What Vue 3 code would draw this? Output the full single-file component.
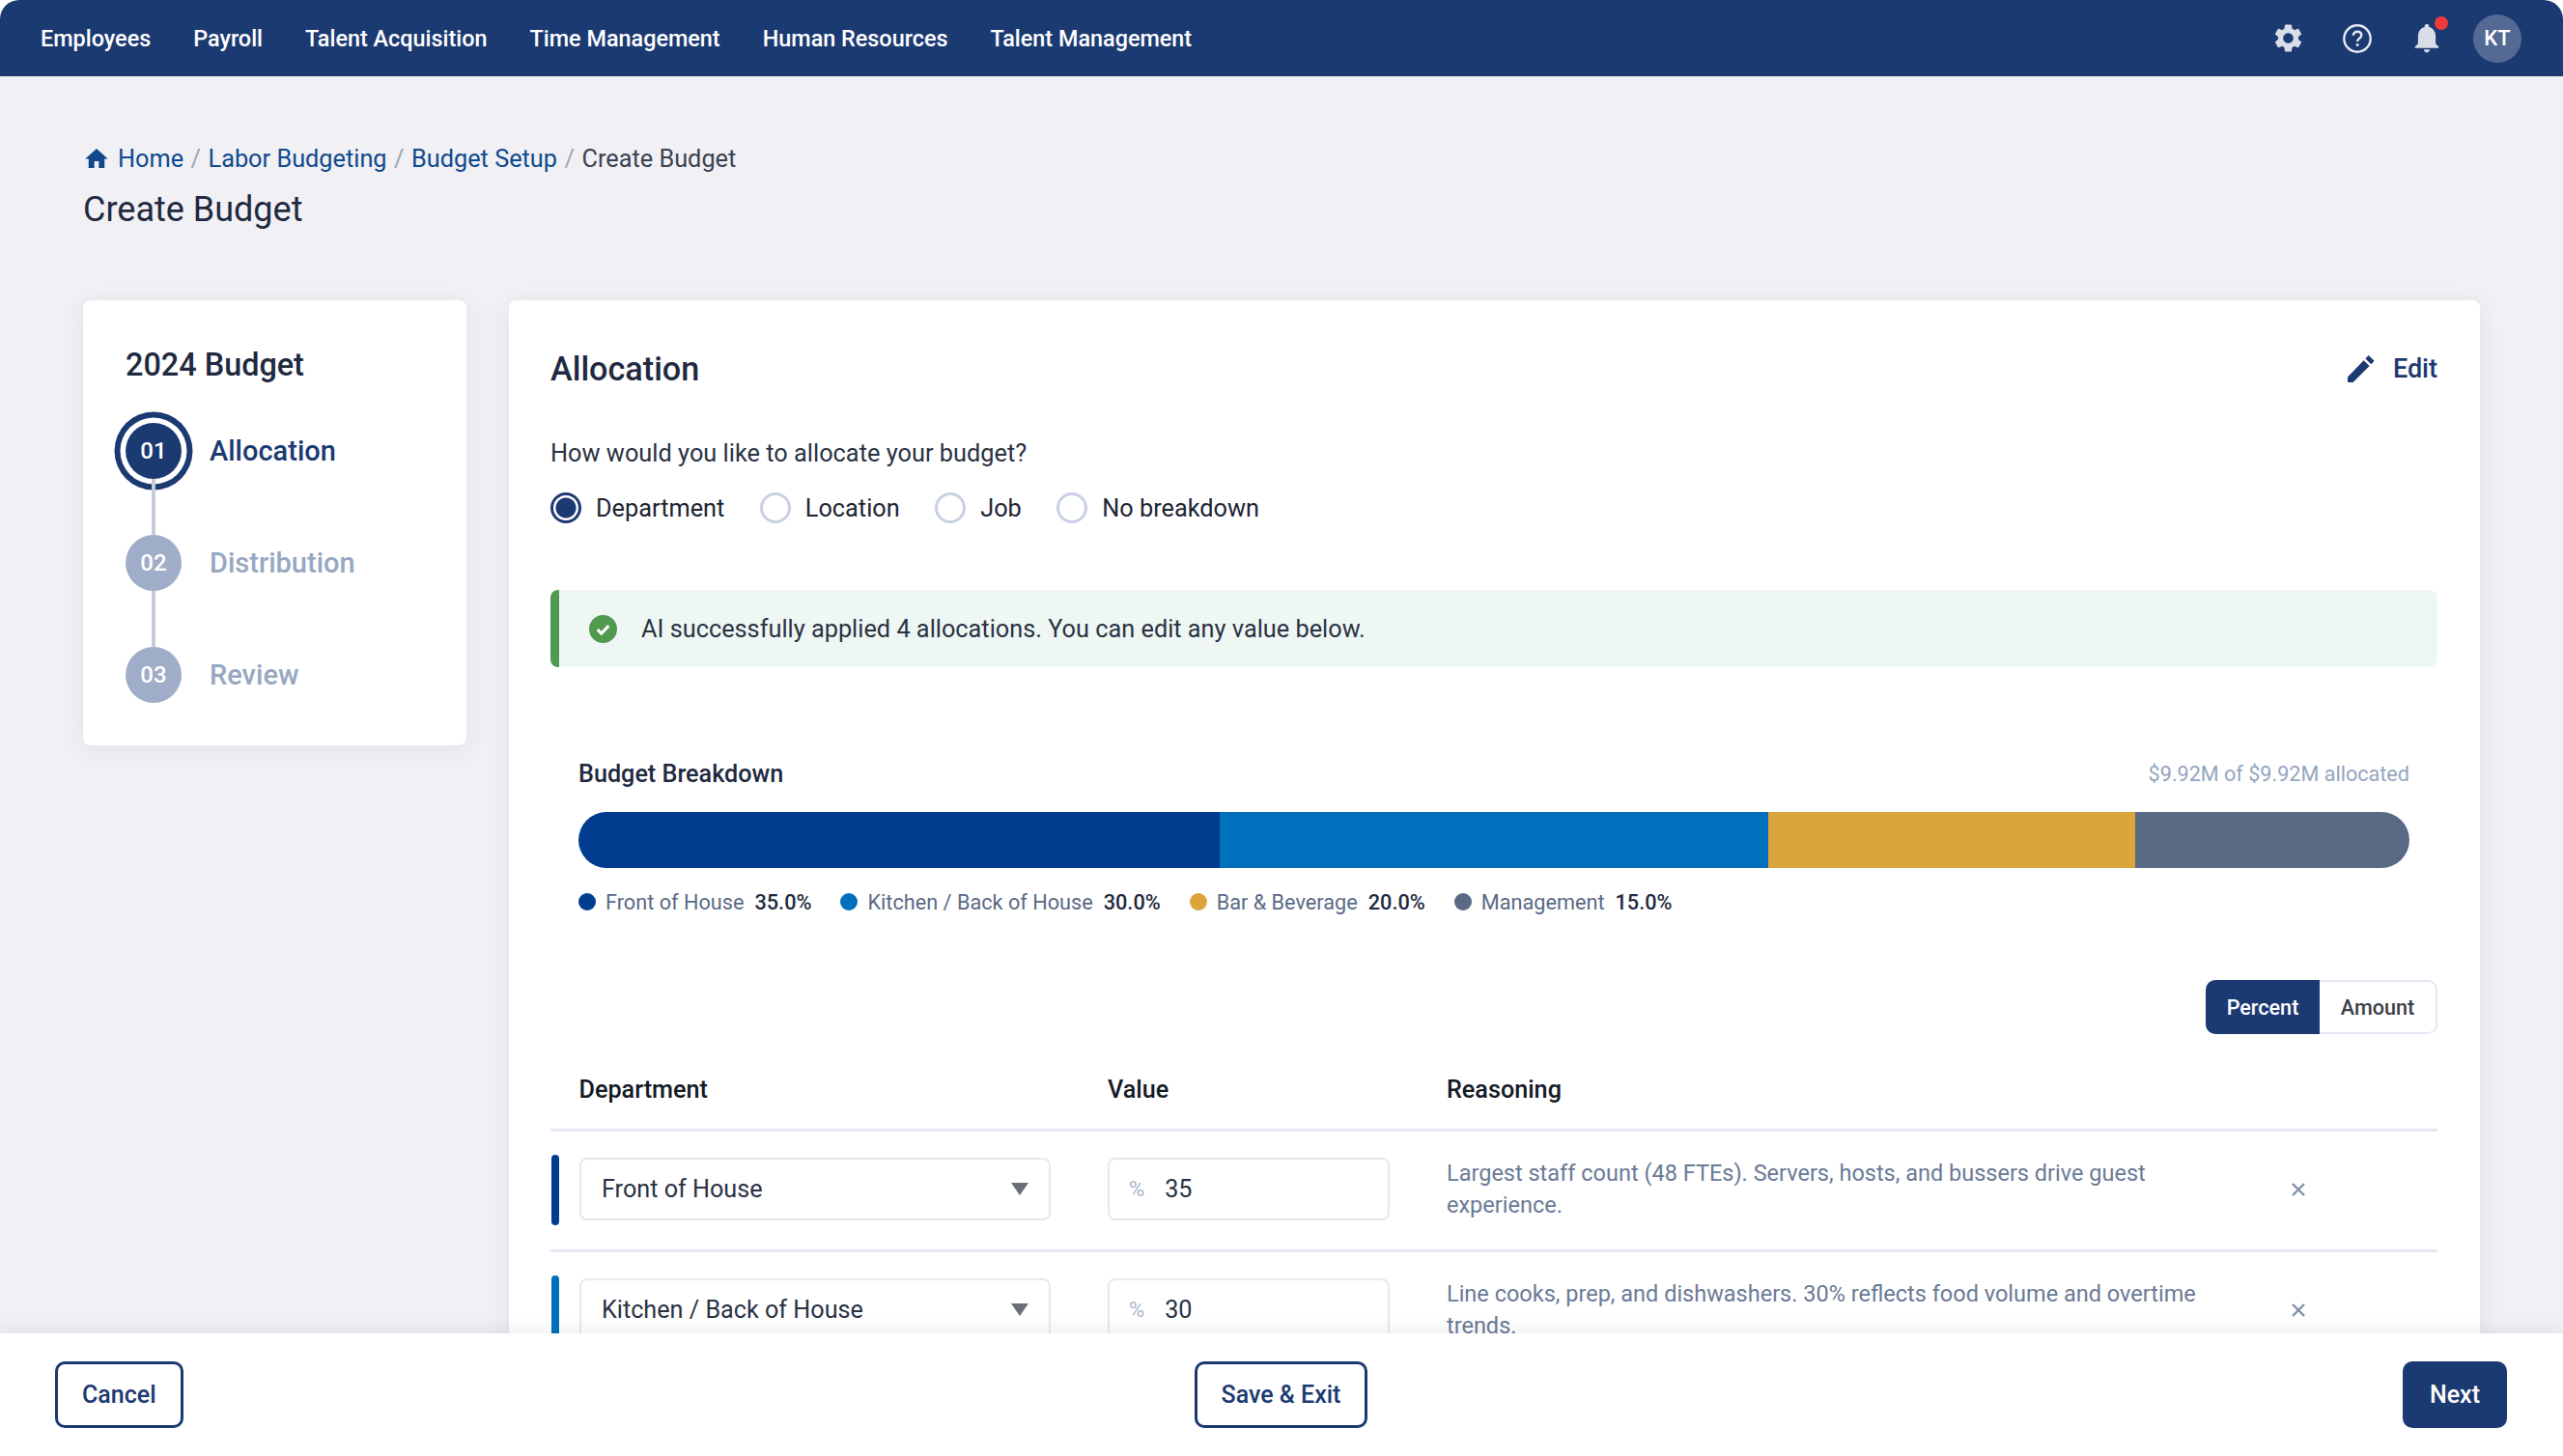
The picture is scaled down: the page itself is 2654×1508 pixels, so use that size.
<script setup>
import { ref } from 'vue'

const navItems = ['Employees', 'Payroll', 'Talent Acquisition', 'Time Management', 'Human Resources', 'Talent Management']
const steps = [
  { num: '01', label: 'Allocation', active: true },
  { num: '02', label: 'Distribution', active: false },
  { num: '03', label: 'Review', active: false },
]
const allocateBy = ref('Department')
const radios = ['Department', 'Location', 'Job', 'No breakdown']
const segments = [
  { label: 'Front of House', pct: 35, color: '#003d8f' },
  { label: 'Kitchen / Back of House', pct: 30, color: '#0070bd' },
  { label: 'Bar & Beverage', pct: 20, color: '#dba53c' },
  { label: 'Management', pct: 15, color: '#5a6a85' },
]
const rows = [
  { dept: 'Front of House', value: 35, color: '#003d8f', reason: 'Largest staff count (48 FTEs). Servers, hosts, and bussers drive guest experience.' },
  { dept: 'Kitchen / Back of House', value: 30, color: '#0070bd', reason: 'Line cooks, prep, and dishwashers. 30% reflects food volume and overtime trends.' },
]
</script>

<template>
  <div class="page">
    <header class="topnav">
      <nav class="nav-links">
        <a v-for="item in navItems" :key="item">{{ item }}</a>
      </nav>
      <div class="nav-icons">
        <svg class="ico-gear" viewBox="0 0 24 24"><path d="M19.14 12.94c.04-.3.06-.61.06-.94 0-.32-.02-.64-.07-.94l2.03-1.58c.18-.14.23-.41.12-.61l-1.92-3.32c-.12-.22-.37-.29-.59-.22l-2.39.96c-.5-.38-1.03-.7-1.62-.94l-.36-2.54c-.04-.24-.24-.41-.48-.41h-3.84c-.24 0-.43.17-.47.41l-.36 2.54c-.59.24-1.13.57-1.62.94l-2.39-.96c-.22-.08-.47 0-.59.22L2.74 8.87c-.12.21-.08.47.12.61l2.03 1.58c-.05.3-.09.63-.09.94s.02.64.07.94l-2.03 1.58c-.18.14-.23.41-.12.61l1.92 3.32c.12.22.37.29.59.22l2.39-.96c.5.38 1.03.7 1.62.94l.36 2.54c.05.24.24.41.48.41h3.84c.24 0 .44-.17.47-.41l.36-2.54c.59-.24 1.13-.56 1.62-.94l2.39.96c.22.08.47 0 .59-.22l1.92-3.32c.12-.22.07-.47-.12-.61l-2.01-1.58zM12 15.6c-1.98 0-3.6-1.62-3.6-3.6s1.62-3.6 3.6-3.6 3.6 1.62 3.6 3.6-1.62 3.6-3.6 3.6z" /></svg>
        <svg class="ico-help" viewBox="0 0 30 30">
          <circle cx="15" cy="15" r="13.7" fill="none" stroke="#e6e9f1" stroke-width="2.4" />
          <path d="M10.8 11.8c0-2.5 1.9-4.1 4.3-4.1s4.2 1.5 4.2 3.7c0 3.1-4.2 3.3-4.2 6.6" fill="none" stroke="#e6e9f1" stroke-width="2.4" />
          <circle cx="15.1" cy="21.6" r="1.5" fill="#e6e9f1" />
        </svg>
        <span class="bell">
          <svg viewBox="3.5 2 17 20.4"><path d="M12 22c1.1 0 2-.9 2-2h-4c0 1.1.9 2 2 2zm6-6v-5c0-3.07-1.63-5.64-4.5-6.32V4c0-.83-.67-1.5-1.5-1.5s-1.5.67-1.5 1.5v.68C7.64 5.36 6 7.92 6 11v5l-2 2v1h16v-1l-2-2z" /></svg>
          <i class="bell-dot"></i>
        </span>
        <span class="avatar">KT</span>
      </div>
    </header>

    <main class="content">
      <div class="crumbs">
        <svg class="ico-home" viewBox="2 3 20 17"><path d="M10 20v-6h4v6h5v-8h3L12 3 2 12h3v8z" /></svg>
        <a>Home</a><span class="sep">/</span>
        <a>Labor Budgeting</a><span class="sep">/</span>
        <a>Budget Setup</a><span class="sep">/</span>
        <span class="here">Create Budget</span>
      </div>
      <h1 class="page-title">Create Budget</h1>

      <div class="columns">
        <aside class="side-card">
          <h2>2024 Budget</h2>
          <ol class="steps">
            <li v-for="s in steps" :key="s.num" class="step" :class="{ active: s.active }">
              <span class="step-num">{{ s.num }}</span>
              <span class="step-label">{{ s.label }}</span>
            </li>
          </ol>
        </aside>

        <section class="main-card">
          <div class="card-head">
            <h2>Allocation</h2>
            <a class="edit">
              <svg viewBox="0 0 28 28"><path d="M0 28V22.4L16.6 5.2 22.6 11 5.6 28zM18.4 3.4 21.6 0l6 5.8-3.3 3.4z" /></svg>
              Edit
            </a>
          </div>

          <p class="question">How would you like to allocate your budget?</p>
          <div class="radios">
            <label v-for="r in radios" :key="r" class="radio" :class="{ on: allocateBy === r }" @click="allocateBy = r">
              <i class="radio-mark"></i>{{ r }}
            </label>
          </div>

          <div class="alert">
            <svg viewBox="0 0 30 30"><circle cx="15" cy="15" r="15" fill="#4f9a4e" /><path d="M9 15.5l4.2 4.2L21 11.5" fill="none" stroke="#fff" stroke-width="3.2" /></svg>
            <span>AI successfully applied 4 allocations. You can edit any value below.</span>
          </div>

          <div class="breakdown">
            <div class="breakdown-head">
              <strong>Budget Breakdown</strong>
              <span>$9.92M of $9.92M allocated</span>
            </div>
            <div class="bar">
              <span v-for="s in segments" :key="s.label" :style="{ width: s.pct + '%', background: s.color }"></span>
            </div>
            <ul class="legend">
              <li v-for="s in segments" :key="s.label">
                <i :style="{ background: s.color }"></i>{{ s.label }}<b>{{ s.pct.toFixed(1) }}%</b>
              </li>
            </ul>
          </div>

          <div class="toggle-row">
            <div class="toggle">
              <button class="sel">Percent</button>
              <button>Amount</button>
            </div>
          </div>

          <div class="table">
            <div class="tr th">
              <span>Department</span>
              <span>Value</span>
              <span>Reasoning</span>
            </div>
            <div v-for="row in rows" :key="row.dept" class="tr">
              <i class="row-color" :style="{ background: row.color }"></i>
              <div class="select">{{ row.dept }}<i class="caret"></i></div>
              <div class="value"><em>%</em>{{ row.value }}</div>
              <p class="reason">{{ row.reason }}</p>
              <svg class="remove" viewBox="0 0 16 16"><path d="M2 2l12 12M14 2 2 14" fill="none" stroke="#7f90ab" stroke-width="2.4" /></svg>
            </div>
          </div>
        </section>
      </div>
    </main>

    <footer class="footer">
      <div><button class="btn">Cancel</button></div>
      <button class="btn">Save &amp; Exit</button>
      <div class="right"><button class="btn primary">Next</button></div>
    </footer>
  </div>
</template>

<style scoped>
.page {
  height: 1508px;
  display: flex;
  flex-direction: column;
  overflow: hidden;
  background: #fff;
  font-family: Roboto, "Liberation Sans", sans-serif;
  color: #1f2a40;
}

.topnav {
  height: 79px;
  flex-shrink: 0;
  display: flex;
  justify-content: space-between;
  align-items: center;
  padding: 0 43px 0 42px;
  background: #1c3a72;
  border-radius: 20px 20px 0 0;
  position: relative;
  z-index: 2;
}
.nav-links {
  display: flex;
  gap: 44px;
}
.nav-links a {
  color: #fff;
  font-size: 23.4px;
  font-weight: 500;
}
.nav-icons {
  display: flex;
  align-items: center;
}
.ico-gear {
  width: 35px;
  height: 35px;
  fill: #d9dde8;
}
.ico-help {
  width: 30px;
  height: 30px;
  margin-left: 39px;
}
.bell {
  position: relative;
  display: block;
  width: 26px;
  height: 31px;
  margin-left: 44px;
}
.bell svg {
  width: 26px;
  height: 31px;
  fill: #d9dde8;
  display: block;
}
.bell-dot {
  position: absolute;
  top: -7px;
  right: -9px;
  width: 14px;
  height: 14px;
  border-radius: 50%;
  background: #f23a3a;
}
.avatar {
  width: 50px;
  height: 50px;
  margin-left: 35px;
  border-radius: 50%;
  background: #546a94;
  color: #fff;
  font-size: 22px;
  font-weight: 500;
  display: flex;
  align-items: center;
  justify-content: center;
}

.content {
  flex: 1;
  min-height: 0;
  overflow: hidden;
  background: #f1f0f4;
  padding: 70px 86px 0;
}
.crumbs {
  display: flex;
  align-items: center;
  height: 30px;
  font-size: 25.3px;
  color: #0f4a8e;
}
.ico-home {
  width: 24px;
  height: 20px;
  fill: #0f4a8e;
  margin: 0 10px 0 2px;
}
.sep {
  color: #9aa6ba;
  margin: 0 7.5px;
}
.here {
  color: #3a4252;
}
.page-title {
  margin: 16px 0 0;
  font-size: 36px;
  line-height: 44px;
  font-weight: 400;
  color: #1f2a40;
}

.columns {
  display: flex;
  align-items: flex-start;
  gap: 44px;
  margin-top: 72px;
}
.side-card {
  width: 397px;
  height: 461px;
  flex-shrink: 0;
  box-sizing: border-box;
  padding: 45px 44px 0;
  background: #fff;
  border-radius: 8px;
  box-shadow: 0 4px 26px rgba(50, 50, 90, 0.08);
}
.side-card h2 {
  margin: 0;
  font-size: 32.4px;
  line-height: 44px;
  font-weight: 500;
  color: #1f2a40;
}
.steps {
  list-style: none;
  margin: 38px 0 0;
  padding: 0;
}
.step {
  position: relative;
  display: flex;
  align-items: center;
  gap: 29px;
  height: 58px;
  margin-bottom: 58px;
}
.step:not(:last-child)::after {
  content: "";
  position: absolute;
  left: 27px;
  top: 58px;
  width: 4px;
  height: 58px;
  background: #c5cbdb;
}
.step-num {
  width: 58px;
  height: 58px;
  flex-shrink: 0;
  border-radius: 50%;
  background: #a0adc8;
  color: #fff;
  font-size: 24px;
  font-weight: 500;
  display: flex;
  align-items: center;
  justify-content: center;
}
.step-label {
  font-size: 29px;
  font-weight: 500;
  color: #97a7c2;
}
.step.active .step-num {
  background: #1c3a72;
  box-shadow: 0 0 0 5.5px #fff, 0 0 0 11.5px #1c3a72;
}
.step.active .step-label {
  color: #1c3a72;
}

.main-card {
  flex: 1;
  min-width: 0;
  height: 1400px;
  box-sizing: border-box;
  padding: 0 44px 0 43px;
  background: #fff;
  border-radius: 8px 8px 0 0;
  box-shadow: 0 4px 26px rgba(50, 50, 90, 0.08);
}
.card-head {
  height: 141px;
  display: flex;
  justify-content: space-between;
  align-items: center;
}
.card-head h2 {
  margin: 0;
  font-size: 34.2px;
  font-weight: 500;
  color: #1f2a40;
}
.edit {
  display: flex;
  align-items: center;
  gap: 19px;
  font-size: 27px;
  font-weight: 500;
  color: #1c3a72;
}
.edit svg {
  width: 28px;
  height: 28px;
  fill: #1c3a72;
}
.question {
  margin: 0;
  font-size: 25.35px;
  line-height: 34px;
  color: #2a3243;
}
.radios {
  display: flex;
  gap: 36.5px;
  margin-top: 24px;
}
.radio {
  display: flex;
  align-items: center;
  gap: 15px;
  height: 32px;
  font-size: 25.3px;
  color: #1d2433;
}
.radio-mark {
  width: 32px;
  height: 32px;
  box-sizing: border-box;
  border-radius: 50%;
  border: 3px solid #c8d1e3;
}
.radio.on .radio-mark {
  border-color: #1c3a72;
  background: radial-gradient(circle, #1c3a72 0 10px, #fff 11px);
}
.alert {
  height: 80px;
  margin-top: 69px;
  box-sizing: border-box;
  padding-left: 31px;
  display: flex;
  align-items: center;
  gap: 25px;
  background: #eff7f4;
  border-left: 9px solid #4f9a4e;
  border-radius: 8px;
  font-size: 25.3px;
  color: #2a3243;
}
.alert svg {
  width: 29px;
  height: 29px;
}

.breakdown {
  padding: 0 29px;
  margin-top: 93px;
}
.breakdown-head {
  display: flex;
  justify-content: space-between;
  align-items: center;
  height: 34px;
}
.breakdown-head strong {
  font-size: 25.2px;
  font-weight: 500;
  color: #1f2a40;
}
.breakdown-head span {
  font-size: 21.6px;
  color: #94a5bf;
}
.bar {
  display: flex;
  height: 58px;
  margin-top: 23px;
  border-radius: 29px;
  overflow: hidden;
}
.bar span {
  display: block;
}
.legend {
  display: flex;
  gap: 30px;
  list-style: none;
  margin: 22px 0 0;
  padding: 0;
  font-size: 21.7px;
  color: #5a6a85;
}
.legend li {
  display: flex;
  align-items: center;
  height: 26px;
}
.legend i {
  width: 18px;
  height: 18px;
  border-radius: 50%;
  margin-right: 10px;
}
.legend b {
  font-weight: 500;
  color: #1f2a40;
  margin-left: 11px;
}

.toggle-row {
  display: flex;
  justify-content: flex-end;
  margin-top: 68px;
}
.toggle {
  display: flex;
  height: 56px;
  box-sizing: border-box;
  border: 2px solid #e6e7f5;
  border-radius: 10px;
}
.toggle button {
  border: 0;
  background: none;
  font: inherit;
  font-size: 21.6px;
  font-weight: 500;
  color: #3c4049;
  width: 120px;
  padding: 0;
}
.toggle .sel {
  width: 118px;
  margin: -2px 0 -2px -2px;
  background: #1c3a72;
  color: #fff;
  border-radius: 10px 0 0 10px;
}

.tr {
  position: relative;
  display: grid;
  grid-template-columns: 488px 351px 861px 160px;
  align-items: center;
  height: 125px;
  padding: 0 0 3px 30px;
  border-bottom: 3px solid #e6e9f3;
  box-sizing: border-box;
}
.th {
  height: 101px;
  padding: 16px 0 0 29.5px;
  font-size: 25.2px;
  font-weight: 500;
  color: #141a26;
  grid-template-columns: 547.5px 351px 1fr;
}
.row-color {
  position: absolute;
  left: 1px;
  top: 24px;
  width: 8px;
  height: 73px;
  border-radius: 4px;
}
.select {
  position: relative;
  box-sizing: border-box;
  height: 65px;
  display: flex;
  align-items: center;
  padding-left: 21px;
  border: 2px solid #e8e8ee;
  border-radius: 8px;
  font-size: 25.2px;
  color: #2a3243;
}
.caret {
  position: absolute;
  right: 21px;
  top: 24px;
  width: 0;
  height: 0;
  border-left: 9px solid transparent;
  border-right: 9px solid transparent;
  border-top: 13px solid #6b6f76;
}
.value {
  box-sizing: border-box;
  width: 292px;
  margin-left: 59px;
  height: 65px;
  display: flex;
  align-items: center;
  padding-left: 20px;
  border: 2px solid #e8e8ee;
  border-radius: 8px;
  font-size: 25.2px;
  color: #2a3243;
}
.value em {
  font-style: normal;
  font-size: 22px;
  color: #a9b5cd;
  margin-right: 21px;
}
.reason {
  margin: 0;
  font-size: 23.5px;
  line-height: 32.6px;
  color: #6a7a96;
  padding-left: 59px;
}
.remove {
  width: 16px;
  height: 16px;
  justify-self: center;
}

.footer {
  height: 127px;
  flex-shrink: 0;
  box-sizing: border-box;
  padding: 0 58px 0 57px;
  display: grid;
  grid-template-columns: 1fr auto 1fr;
  align-items: center;
  background: #fff;
  box-shadow: 0 -4px 18px rgba(50, 50, 90, 0.08);
  position: relative;
  z-index: 2;
}
.right {
  display: flex;
  justify-content: flex-end;
}
.btn {
  height: 69px;
  padding: 0 25px;
  background: #fff;
  border: 3px solid #1c3a72;
  border-radius: 10px;
  font: inherit;
  font-size: 25px;
  font-weight: 500;
  color: #1c3a72;
}
.btn.primary {
  background: #1c3a72;
  color: #fff;
}
</style>

<style>
html, body {
  margin: 0;
  background: #fff;
}
</style>
